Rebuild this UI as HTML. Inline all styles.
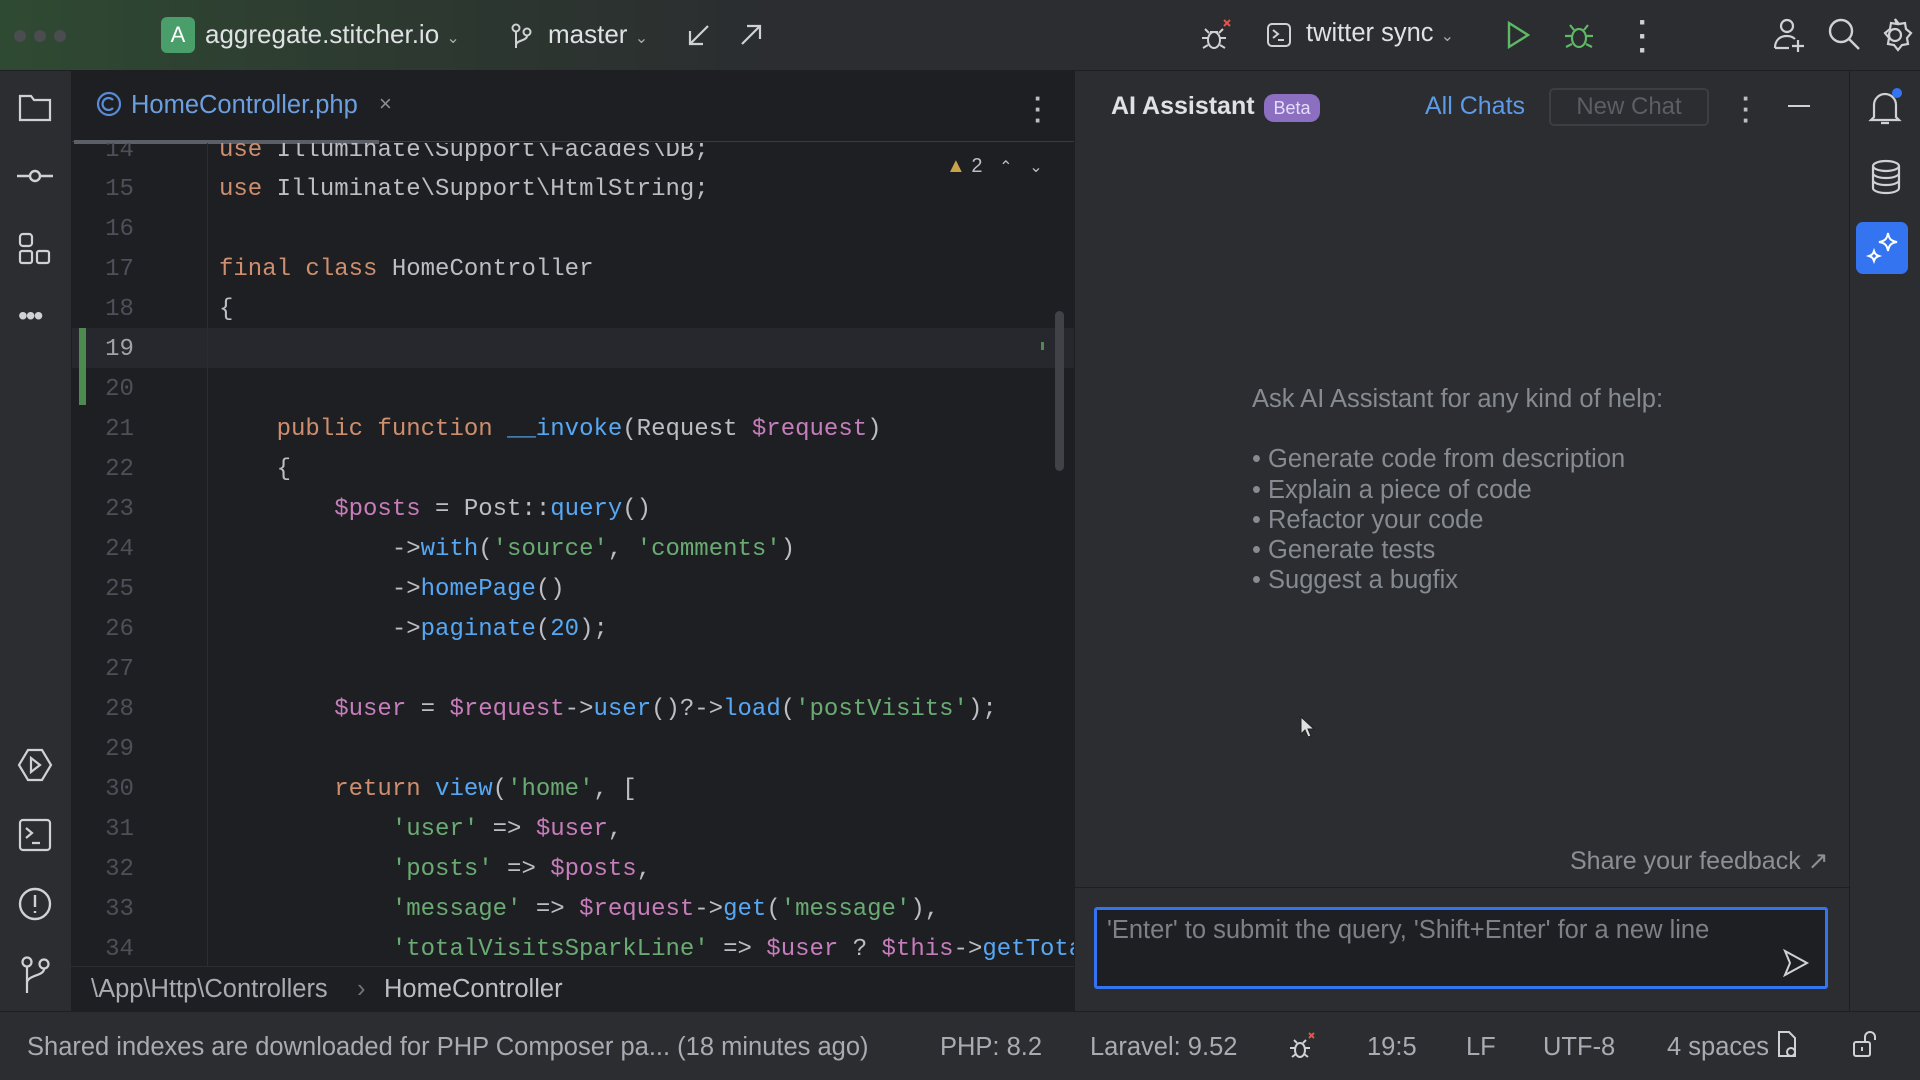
<!DOCTYPE html>
<html><head><meta charset="utf-8"><style>
*{margin:0;padding:0;box-sizing:border-box}
body{width:1920px;height:1080px;overflow:hidden;background:#2b2d30;font-family:"Liberation Sans",sans-serif;color:#dfe1e5;position:relative}
.abs{position:absolute}
.title{left:0;top:0;width:1920px;height:71px;background:linear-gradient(90deg,#2f4a33 0%,#2d3b30 18%,#2b2d30 40%);border-bottom:1px solid #1e1f22}
.tt{font-size:26px;color:#dfe1e5;top:19px}
.editor{left:71px;top:71px;width:1003px;height:940px;background:#1e1f22;border-left:1px solid #1e1f22}
.code{position:absolute;left:0;width:1003px;height:40px;line-height:40px;font-family:"Liberation Mono",monospace;font-size:24px;white-space:pre;color:#bcbec4}
.ln{position:absolute;left:0;width:97px;text-align:center;color:#4b5059}
.tx{position:absolute;left:148px}
.k{color:#cf8e6d}.v{color:#c77dbb}.f{color:#56a8f5}.s{color:#6aab73}
.ai{left:1074px;top:71px;width:775px;height:940px;background:#2b2d30;border-left:1px solid #1e1f22}
.right{left:1849px;top:71px;width:71px;height:940px;background:#2b2d30;border-left:1px solid #1e1f22}
.status{left:0;top:1011px;width:1920px;height:69px;background:#2b2d30;border-top:1px solid #1e1f22;font-size:25.5px;color:#a8abb2}
.status span{position:absolute;top:21px}
svg{position:absolute}
</style></head><body>
<div class="abs title"></div>
<div class="abs" style="left:14px;top:30px;width:12px;height:12px;border-radius:6px;background:#4a4c50"></div>
<div class="abs" style="left:34px;top:30px;width:12px;height:12px;border-radius:6px;background:#4a4c50"></div>
<div class="abs" style="left:54px;top:30px;width:12px;height:12px;border-radius:6px;background:#4a4c50"></div>
<div class="abs" style="left:161px;top:17px;width:34px;height:36px;border-radius:6px;background:#4a9e6a;color:#fff;font-size:22px;text-align:center;line-height:36px">A</div>
<div class="abs tt" style="left:205px">aggregate.stitcher.io <span style="font-size:16px;color:#aaa">&#8964;</span></div>
<svg style="left:510px;top:22px" width="24" height="28" viewBox="0 0 24 28" fill="none" stroke="#cfd1d5" stroke-width="2"><circle cx="6" cy="6" r="3.5"/><circle cx="17" cy="10" r="3.5"/><path d="M6 10v16M17 14c0 5-11 4-11 9"/></svg>
<div class="abs tt" style="left:548px">master <span style="font-size:16px;color:#aaa">&#8964;</span></div>
<svg style="left:686px;top:22px" width="26" height="26" fill="none" stroke="#cfd1d5" stroke-width="2.2"><path d="M22 4L4 22M4 9v13h13"/></svg>
<svg style="left:738px;top:22px" width="26" height="26" fill="none" stroke="#cfd1d5" stroke-width="2.2"><path d="M4 22L22 4M9 4h13v13"/></svg>
<svg style="left:1198px;top:18px" width="36" height="36" fill="none" stroke="#cfd1d5" stroke-width="2"><ellipse cx="16" cy="22" rx="6" ry="8"/><path d="M10 20H4M22 20h6M10 27l-5 3M22 27l5 3M11 15l-4-4M21 15l4-4M12 14h8"/><path d="M26 2l6 6M32 2l-6 6" stroke="#e5534b"/></svg>
<svg style="left:1266px;top:22px" width="26" height="26" fill="none" stroke="#cfd1d5" stroke-width="2"><rect x="2" y="2" width="22" height="22" rx="4"/><path d="M7 8l5 4-5 4M12 18h6"/></svg>
<div class="abs tt" style="left:1306px;font-size:25.5px">twitter sync <span style="font-size:16px;color:#aaa">&#8964;</span></div>
<svg style="left:1505px;top:20px" width="26" height="30" fill="none" stroke="#5fb865" stroke-width="2.4"><path d="M4 3l19 12L4 27z"/></svg>
<svg style="left:1562px;top:18px" width="34" height="34" fill="none" stroke="#5fb865" stroke-width="2.2"><ellipse cx="17" cy="20" rx="7" ry="9"/><path d="M10 18H3M24 18h7M10 26l-6 3M24 26l6 3M12 12l-4-5M22 12l4-5"/></svg>
<div class="abs" style="left:1638px;top:16px;color:#cfd1d5;font-size:30px;font-weight:bold;line-height:14px">·<br>·<br>·</div>
<svg style="left:1772px;top:16px" width="36" height="38" fill="none" stroke="#cfd1d5" stroke-width="2.2"><circle cx="15" cy="10" r="6"/><path d="M3 32c0-8 5-12 12-12 4 0 6 1 8 3M26 24v12M20 30h12M3 32h14"/></svg>
<svg style="left:1826px;top:16px" width="36" height="38" fill="none" stroke="#cfd1d5" stroke-width="2.4"><circle cx="15" cy="15" r="11"/><path d="M23 23l10 10"/></svg>
<svg style="left:1876px;top:16px" width="38" height="38" fill="none" stroke="#cfd1d5" stroke-width="2.2"><circle cx="19" cy="19" r="6"/><path d="M19 3l4 5 6-1 1 6 5 4-4 5 1 6-6 1-4 5-4-5-6-1 1-6-4-5 5-4 1-6 6 1z"/></svg>

<svg style="left:18px;top:92px" width="34" height="30" fill="none" stroke="#cfd1d5" stroke-width="2.2"><path d="M2 4h11l3 4h16v20H2z"/></svg>
<svg style="left:16px;top:166px" width="38" height="20" fill="none" stroke="#cfd1d5" stroke-width="2.4"><circle cx="19" cy="10" r="5"/><path d="M1 10h13M24 10h13"/></svg>
<svg style="left:18px;top:232px" width="34" height="34" fill="none" stroke="#cfd1d5" stroke-width="2.2"><rect x="2" y="2" width="12" height="12" rx="3"/><rect x="2" y="19" width="12" height="12" rx="2"/><rect x="19" y="19" width="12" height="12" rx="2"/></svg>
<div class="abs" style="left:18px;top:300px;color:#cfd1d5;font-size:28px;letter-spacing:-2px">•••</div>
<svg style="left:17px;top:747px" width="36" height="36" fill="none" stroke="#cfd1d5" stroke-width="2.2"><path d="M11 3h14l9 15-9 15H11L2 18z"/><path d="M14 11l9 7-9 7z"/></svg>
<svg style="left:18px;top:818px" width="34" height="34" fill="none" stroke="#cfd1d5" stroke-width="2.2"><rect x="2" y="2" width="30" height="30" rx="3"/><path d="M8 10l6 5-6 5M14 25h8"/></svg>
<svg style="left:17px;top:886px" width="36" height="36" fill="none" stroke="#cfd1d5" stroke-width="2.4"><circle cx="18" cy="18" r="15"/><path d="M18 9v12M18 25v2"/></svg>
<svg style="left:20px;top:955px" width="32" height="40" fill="none" stroke="#cfd1d5" stroke-width="2.2"><circle cx="7" cy="7" r="4.5"/><circle cx="24" cy="9" r="4.5"/><path d="M7 12v26M24 14c0 7-17 6-17 14"/></svg>

<div class="abs editor">
 <svg style="left:24px;top:20px" width="26" height="26" fill="none" stroke="#5a8bd6" stroke-width="2.2"><circle cx="13" cy="13" r="11"/><path d="M17 9a6 6 0 1 0 0 8"/></svg>
 <div class="abs" style="left:59px;top:20px;font-size:25.5px;color:#6c9fe0">HomeController.php</div>
 <div class="abs" style="left:307px;top:20px;font-size:22px;color:#8c8f94">×</div>
 <div class="abs" style="left:962px;top:22px;color:#bcbec4;font-size:26px;font-weight:bold;line-height:11px">·<br>·<br>·</div>
 <div class="abs" style="left:0;top:70px;width:1003px;height:1px;background:#393b40"></div>
 <div class="abs" style="left:2px;top:69px;width:305px;height:4px;background:#5c5f66"></div>
 <div class="abs" style="left:0;top:72px;width:1003px;height:848px;overflow:hidden">
  <div class="abs" style="left:0;top:185px;width:1003px;height:40px;background:#26282e"></div>
  <div class="abs" style="left:7px;top:185px;width:7px;height:77px;background:#4c8a4f"></div>
  <div class="abs" style="left:135px;top:0;width:1px;height:848px;background:#2b2d30"></div>
  <div class="abs" style="left:983px;top:168px;width:9px;height:160px;border-radius:5px;background:#404247"></div>
  <div class="abs" style="left:969px;top:199px;width:3px;height:8px;background:#4c8a4f"></div>
  <div class="abs" style="left:874px;top:12px;font-size:20px;color:#bcbec4"><span style="color:#c9a24a">▲</span> 2 &nbsp;&nbsp;<span style="font-size:16px">&#8963;</span> &nbsp; <span style="font-size:16px">&#8964;</span></div>
 </div>
</div>
<div class="abs" style="left:71px;top:143px;width:1003px;height:823px;overflow:hidden">
<div class="code" style="top:-12px"><span class="ln">14</span><span class="tx"><span class="k">use</span> Illuminate\Support\Facades\DB;</span></div>
<div class="code" style="top:27px"><span class="ln">15</span><span class="tx"><span class="k">use</span> Illuminate\Support\HtmlString;</span></div>
<div class="code" style="top:67px"><span class="ln">16</span></div>
<div class="code" style="top:107px"><span class="ln">17</span><span class="tx"><span class="k">final class</span> HomeController</span></div>
<div class="code" style="top:147px"><span class="ln">18</span><span class="tx">{</span></div>
<div class="code" style="top:187px"><span class="ln" style="color:#a1a3ab">19</span></div>
<div class="code" style="top:227px"><span class="ln">20</span></div>
<div class="code" style="top:267px"><span class="ln">21</span><span class="tx">    <span class="k">public function</span> <span class="f">__invoke</span>(Request <span class="v">$request</span>)</span></div>
<div class="code" style="top:307px"><span class="ln">22</span><span class="tx">    {</span></div>
<div class="code" style="top:347px"><span class="ln">23</span><span class="tx">        <span class="v">$posts</span> = Post::<span class="f">query</span>()</span></div>
<div class="code" style="top:387px"><span class="ln">24</span><span class="tx">            -><span class="f">with</span>(<span class="s">'source'</span>, <span class="s">'comments'</span>)</span></div>
<div class="code" style="top:427px"><span class="ln">25</span><span class="tx">            -><span class="f">homePage</span>()</span></div>
<div class="code" style="top:467px"><span class="ln">26</span><span class="tx">            -><span class="f">paginate</span>(<span class="f">20</span>);</span></div>
<div class="code" style="top:507px"><span class="ln">27</span></div>
<div class="code" style="top:547px"><span class="ln">28</span><span class="tx">        <span class="v">$user</span> = <span class="v">$request</span>-><span class="f">user</span>()?-><span class="f">load</span>(<span class="s">'postVisits'</span>);</span></div>
<div class="code" style="top:587px"><span class="ln">29</span></div>
<div class="code" style="top:627px"><span class="ln">30</span><span class="tx">        <span class="k">return</span> <span class="f">view</span>(<span class="s">'home'</span>, [</span></div>
<div class="code" style="top:667px"><span class="ln">31</span><span class="tx">            <span class="s">'user'</span> => <span class="v">$user</span>,</span></div>
<div class="code" style="top:707px"><span class="ln">32</span><span class="tx">            <span class="s">'posts'</span> => <span class="v">$posts</span>,</span></div>
<div class="code" style="top:747px"><span class="ln">33</span><span class="tx">            <span class="s">'message'</span> => <span class="v">$request</span>-><span class="f">get</span>(<span class="s">'message'</span>),</span></div>
<div class="code" style="top:787px"><span class="ln">34</span><span class="tx">            <span class="s">'totalVisitsSparkLine'</span> => <span class="v">$user</span> ? <span class="v">$this</span>-><span class="f">getTotalVisits</span></span></div>
</div>
<div class="abs" style="left:71px;top:966px;width:1003px;height:45px;background:#1e1f22;border-top:1px solid #2b2d30;font-size:25.5px;color:#bcbec4">
 <span class="abs" style="left:20px;top:8px;color:#a8abb2">\App\Http\Controllers</span>
 <span class="abs" style="left:286px;top:8px;color:#6f737a">›</span>
 <span class="abs" style="left:313px;top:8px">HomeController</span>
</div>

<div class="abs ai">
 <div class="abs" style="left:36px;top:21px;font-size:25px;font-weight:bold;color:#dfe1e5">AI Assistant</div>
 <div class="abs" style="left:189px;top:23px;width:56px;height:28px;border-radius:10px;background:#8c6fc1;color:#e5defa;font-size:18px;text-align:center;line-height:28px">Beta</div>
 <div class="abs" style="left:350px;top:21px;font-size:25px;color:#5d9ae8">All Chats</div>
 <div class="abs" style="left:474px;top:17px;width:160px;height:38px;border:2px solid #3c3e43;border-radius:5px;font-size:24px;color:#5b5e64;text-align:center;line-height:34px">New Chat</div>
 <div class="abs" style="left:667px;top:22px;color:#bcbec4;font-size:26px;font-weight:bold;line-height:11px">·<br>·<br>·</div>
 <div class="abs" style="left:713px;top:34px;width:22px;height:2px;background:#cfd1d5"></div>
 <div class="abs" style="left:177px;top:313px;font-size:25.5px;color:#868a91;line-height:30.2px">Ask AI Assistant for any kind of help:<br><br>• Generate code from description<br>• Explain a piece of code<br>• Refactor your code<br>• Generate tests<br>• Suggest a bugfix</div>
 <svg style="left:225px;top:645px" width="16" height="22"><path d="M1 1v17l4-4 3 7 3-1-3-7h6z" fill="#e0e0e0" stroke="#222" stroke-width="1"/></svg>
 <div class="abs" style="left:495px;top:775px;font-size:25px;color:#8c8f94">Share your feedback ↗</div>
 <div class="abs" style="left:0;top:816px;width:775px;height:1px;background:#1e1f22"></div>
 <div class="abs" style="left:19px;top:836px;width:734px;height:82px;border:3px solid #3574f0;border-radius:3px;background:#1e1f22">
  <div class="abs" style="left:10px;top:6px;font-size:25.5px;color:#7d8087">'Enter' to submit the query, 'Shift+Enter' for a new line</div>
  <svg style="left:685px;top:38px" width="28" height="30" fill="none" stroke="#cfd1d5" stroke-width="2"><path d="M3 3l22 12L3 27l5-12z"/></svg>
 </div>
</div>
<div class="abs right">
 <svg style="left:16px;top:16px" width="40" height="40" fill="none" stroke="#cfd1d5" stroke-width="2.2"><path d="M8 30V18a11 11 0 0 1 22 0v12l3 3H5zM15 36h8"/><circle cx="31" cy="6" r="5" fill="#3574f0" stroke="none"/></svg>
 <svg style="left:20px;top:88px" width="32" height="36" fill="none" stroke="#cfd1d5" stroke-width="2.2"><ellipse cx="16" cy="7" rx="13" ry="5"/><path d="M3 7v22c0 3 6 5 13 5s13-2 13-5V7M3 14c0 3 6 5 13 5s13-2 13-5M3 21c0 3 6 5 13 5s13-2 13-5"/></svg>
 <div class="abs" style="left:6px;top:151px;width:52px;height:52px;border-radius:7px;background:#3574f0"></div>
 <svg style="left:14px;top:158px" width="38" height="38" fill="none" stroke="#fff" stroke-width="2"><path d="M24 4c1 6 3 8 9 9-6 1-8 3-9 9-1-6-3-8-9-9 6-1 8-3 9-9zM10 22c1 3 2 4 5 5-3 1-4 2-5 5-1-3-2-4-5-5 3-1 4-2 5-5z"/></svg>
</div>

<div class="abs status">
 <span style="left:27px">Shared indexes are downloaded for PHP Composer pa... (18 minutes ago)</span>
 <span style="left:940px">PHP: 8.2</span>
 <span style="left:1090px">Laravel: 9.52</span>
 <svg style="left:1288px;top:18px" width="30" height="32" fill="none" stroke="#cfd1d5" stroke-width="2"><ellipse cx="12" cy="20" rx="5" ry="7"/><path d="M7 18H2M17 18h5M8 24l-4 3M16 24l4 3M9 13l-3-3M15 13l3-3"/><path d="M21 3l5 5M26 3l-5 5" stroke="#e5534b"/></svg>
 <span style="left:1367px">19:5</span>
 <span style="left:1466px">LF</span>
 <span style="left:1543px">UTF-8</span>
 <span style="left:1667px">4 spaces</span>
 <svg style="left:1776px;top:16px" width="24" height="32" fill="none" stroke="#cfd1d5" stroke-width="2"><path d="M3 4h10l6 6v18H3z"/><circle cx="15" cy="24" r="4"/></svg>
 <svg style="left:1852px;top:18px" width="26" height="30" fill="none" stroke="#cfd1d5" stroke-width="2"><rect x="2" y="12" width="16" height="14" rx="2"/><path d="M13 12V7a5 5 0 0 1 10 0v3M10 17v4"/></svg>
</div>
</body></html>
